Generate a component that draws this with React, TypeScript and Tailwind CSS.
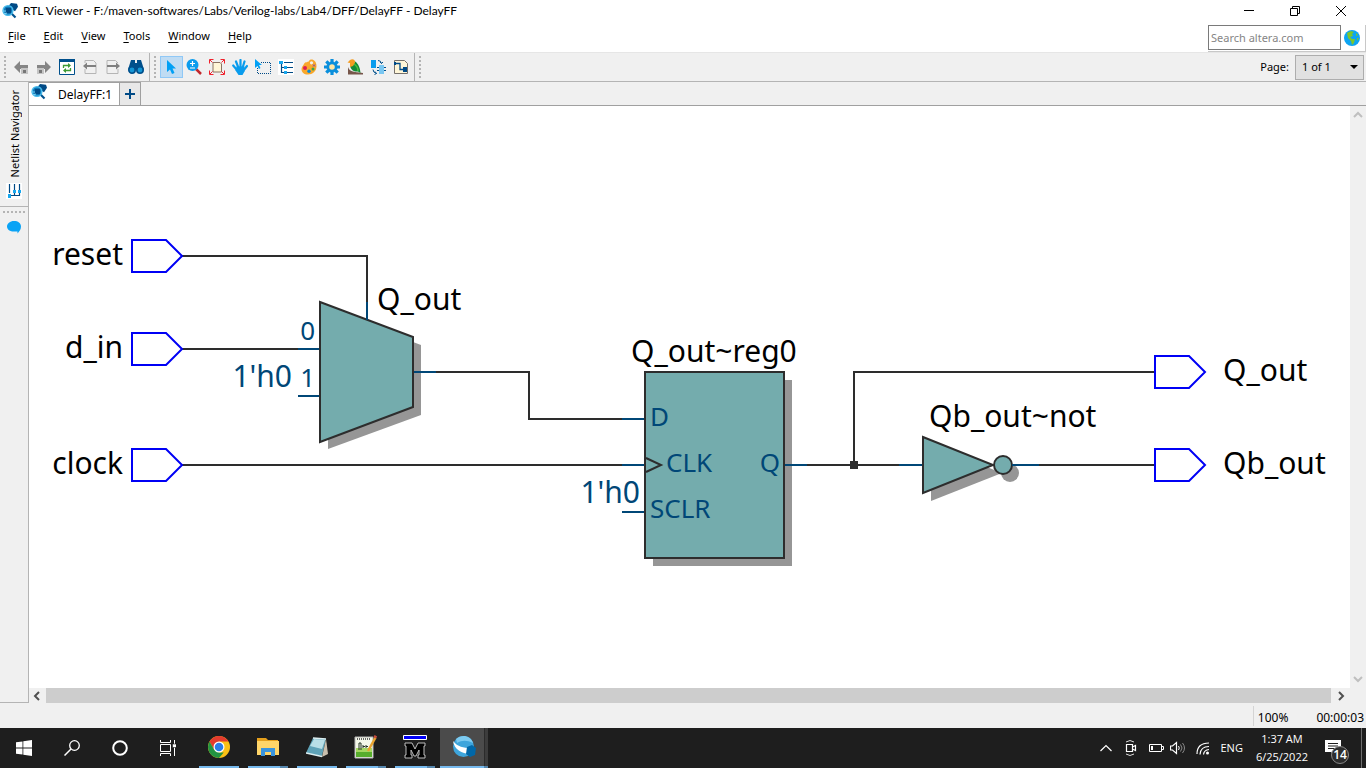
import React from "react";

type IconProps = { children: React.ReactNode; size?: string; box?: string };

function Icon({ children, size = "size-4", box = "0 0 16 16" }: IconProps) {
  return (
    <svg viewBox={box} className={`${size} shrink-0`} fill="none" aria-hidden="true">
      {children}
    </svg>
  );
}

function AppIcon() {
  return (
    <Icon>
      <path d="M7 2.5 9 0l6 .8 1 3-3 4.400-2-1.200L7 4z" fill="#004a86" />
      <path d="M9.500 10.500 13.500 14.500" stroke="#00508c" strokeWidth="2.200" />
      <circle cx="6" cy="7.500" r="4.800" fill="#0b74b5" stroke="#46b9ea" strokeWidth="1.600" />
      <path d="M4 5h5v5H4z" fill="#004a86" />
      <path d="M0 8h4M2 11l3-1" stroke="#7ccff2" strokeWidth="1.200" />
    </Icon>
  );
}

const TreeIcon = () => (
  <Icon>
    <path d="M0 0h16v16H0z" fill="#fff" />
    <path d="M3.500 3v10.500H7M3.500 8.500H7M6 3.500h9M9 8.500h6M9 13.500h6" stroke="#004a86" strokeWidth="1.200" />
    <path d="M1 2h4v3H1zM6 7h3v3H6zM6 12h3v3H6z" fill="#18a7ee" />
  </Icon>
);

const navTools = [
  {
    label: "Back",
    icon: (
      <Icon>
        <path d="M1 8l6-6v4h8v4H7v4z" fill="#858585" />
        <path d="M8 9h7v6H8z" fill="#c4c4c4" />
        <path d="M10 11h3v3h-3z" fill="#777" />
      </Icon>
    ),
  },
  {
    label: "Forward",
    icon: (
      <Icon>
        <path d="M15 8L9 2v4H1v4h8v4z" fill="#858585" />
        <path d="M1 9h7v6H1z" fill="#c4c4c4" />
        <path d="M3 11h3v3H3z" fill="#777" />
      </Icon>
    ),
  },
  {
    label: "Refresh",
    icon: (
      <Icon>
        <path d="M.5.5h15v15H.5z" fill="#fff" stroke="#00508c" />
        <path d="M0 0h16v3H0z" fill="#00508c" />
        <path d="M4.500 9V6.500H11M11.500 9v2.500H5" stroke="#3e9b35" strokeWidth="1.300" />
        <path d="M9 4l3 2.500L9 9zM7 9l-3 2.500L7 14z" fill="#3e9b35" />
      </Icon>
    ),
  },
  {
    label: "Previous page",
    icon: (
      <Icon>
        <path d="M3 4V1.500h8.500L14 4v10.500H3V10" stroke="#b5b5b5" />
        <path d="M1 7l4-3.500V6h9v2H5v2.500z" fill="#808080" />
      </Icon>
    ),
  },
  {
    label: "Next page",
    icon: (
      <Icon>
        <path d="M13 4 10.500 1.500H2v13h11V10" stroke="#b5b5b5" />
        <path d="M15 7l-4-3.500V6H2v2h9v2.500z" fill="#808080" />
      </Icon>
    ),
  },
  {
    label: "Find",
    icon: (
      <Icon>
        <path d="M3 1h4v3h2V1h4l2.500 8v2H.5V9z" fill="#00508c" />
        <circle cx="4" cy="11" r="3.200" fill="#1596d5" stroke="#00508c" strokeWidth="1.600" />
        <circle cx="12" cy="11" r="3.200" fill="#1596d5" stroke="#00508c" strokeWidth="1.600" />
      </Icon>
    ),
  },
];

const viewTools = [
  {
    label: "Selection tool",
    icon: (
      <Icon>
        <path d="M4 1v12l3-2.500L9 15l2.500-1L9.500 9.500H13z" fill="#00a0f5" />
      </Icon>
    ),
  },
  {
    label: "Zoom",
    icon: (
      <Icon>
        <path d="M10 10l5 5" stroke="#c3282d" strokeWidth="2.500" />
        <circle cx="6.500" cy="6" r="6" fill="#0a9ced" />
        <path d="M6.500 2v5M4 4.500h5M4 9h5" stroke="#fff" strokeWidth="1.200" />
      </Icon>
    ),
  },
  {
    label: "Fit in window",
    icon: (
      <Icon>
        <path d="M4 3.500h7l1.500 1.500v8H4z" fill="#fff6d8" stroke="#8b7464" />
        <path
          d="M.5 4.500v-4h4M11.500.5h4v4M.5 11.500v4h4M15.500 11.500v4h-4M1 1l2.500 2.500M15 1l-2.500 2.500M1 15l2.500-2.500M15 15l-2.500-2.500"
          stroke="#f0202b"
        />
      </Icon>
    ),
  },
  {
    label: "Hand tool",
    icon: (
      <Icon>
        <path
          d="M1.200 6.500 5 11M4 2.500 6.500 9M8.500 1v8M12.500 2.500 10.500 9M15 7l-4 5"
          stroke="#0a9ced"
          strokeWidth="2.200"
          strokeLinecap="round"
        />
        <path d="M4.500 7.500h8v5L10.500 16H6.500L3.500 11.500z" fill="#0a9ced" />
      </Icon>
    ),
  },
  {
    label: "Area selection",
    icon: (
      <Icon>
        <path d="M6 3.500h9.500v11h-13V8" stroke="#004a86" strokeDasharray="1 1" />
        <path d="M0 0v9l2.500-2L4 10l1.500-1L4 6h3z" fill="#00a0f5" />
      </Icon>
    ),
  },
  { label: "Netlist navigator", icon: <TreeIcon /> },
  {
    label: "Color settings",
    icon: (
      <Icon>
        <path
          d="M3 5c1.500-3 4-1 5-3 2-3 7.500-1 7.500 5 0 5.500-4 8.500-8.500 8.500-4 0-6.500-2-6.500-5.500C.5 8 2 7 3 5z"
          fill="#f9a72b"
        />
        <circle cx="10.500" cy="3.800" r="1.600" fill="#efefef" />
        <circle cx="4" cy="9" r="2" fill="#dd1f53" />
        <circle cx="8" cy="12.300" r="1.700" fill="#008be0" />
        <circle cx="12" cy="10" r="1.500" fill="#3aa64a" />
        <path d="M12 5.500l2 2M14 5.500l-2 2" stroke="#8147a8" />
      </Icon>
    ),
  },
  {
    label: "Display settings",
    icon: (
      <Icon>
        <path
          d="M8 0v3M8 13v3M0 8h3M13 8h3M2.300 2.300l2.200 2.200M11.500 11.500l2.200 2.200M13.700 2.300l-2.200 2.200M4.500 11.500l-2.200 2.200"
          stroke="#0a8fdc"
          strokeWidth="3.200"
        />
        <circle cx="8" cy="8" r="4.200" fill="#ffe6a5" stroke="#0a8fdc" strokeWidth="2.800" />
      </Icon>
    ),
  },
  {
    label: "Bird's eye view",
    icon: (
      <Icon>
        <path d="M1 8c1 4 5 5 15 6v1.500H1z" fill="#76564a" />
        <path d="M3 5 7 2c3 1 6 5 6.500 12L11 12.500C6 13 3 10 3 5z" fill="#128a36" />
        <path d="M.5 3.500 3 1c3-2 5.500 0 5 3L6 7 3 8V4z" fill="#f49c22" />
        <path d="M7 5c3 2 4 4 4 7" stroke="#4bbf3d" strokeWidth="1.500" />
      </Icon>
    ),
  },
  {
    label: "Swap",
    icon: (
      <Icon>
        <path d="M1 1h5v8H1z" fill="#0a9ced" />
        <path d="M9 6h5v9H9z" fill="#79c7f2" />
        <path
          d="M8 1.500q3 0 3.500 3M10 3l1.500 1.500L13 3M3 10.500q0 3 3.500 4M5 12.500 6.500 14.500 4.500 15.500M7 8.500h2M7 11.500h2M14 8.500h2M14 11.500h2"
          stroke="#00508c"
        />
      </Icon>
    ),
  },
  {
    label: "Schematic page",
    icon: (
      <Icon>
        <path d="M1.500 1.500h10l3 3v10h-13z" fill="#fff6d8" stroke="#75706b" />
        <path d="M1 4.500h6v6h5" stroke="#004a86" strokeWidth="1.300" />
        <path d="M10 8h4v5h-4zM1 3h2v3H1z" fill="#004a86" />
      </Icon>
    ),
  },
];

const menus = ["File", "Edit", "View", "Tools", "Window", "Help"];

function Handle() {
  return (
    <svg viewBox="0 0 2 22" className="h-[22px] w-0.5 shrink-0" aria-hidden="true">
      <path d="M1 0v22" stroke="#b4b4b4" strokeWidth="2" strokeDasharray="2 2" />
    </svg>
  );
}

function TitleBar() {
  return (
    <header className="flex h-[22px] shrink-0 items-center bg-white pr-0.5 pl-0.5">
      <AppIcon />
      <h1 className="ml-[5px] grow font-['Lato',sans-serif] text-xs">
        RTL Viewer - F:/maven-softwares/Labs/Verilog-labs/Lab4/DFF/DelayFF - DelayFF
      </h1>
      <button aria-label="Minimize" className="flex w-[46px] justify-center">
        <Icon size="size-3" box="0 0 12 12">
          <path d="M1 5.500h10" stroke="#000" />
        </Icon>
      </button>
      <button aria-label="Restore" className="flex w-[46px] justify-center">
        <Icon size="size-3" box="0 0 12 12">
          <path d="M1.500 3.500h7v7h-7zM3.500 3.500v-2h7v7h-2" stroke="#000" />
        </Icon>
      </button>
      <button aria-label="Close" className="flex w-[46px] justify-center">
        <Icon size="size-3" box="0 0 12 12">
          <path d="M1 1l10 10M11 1 1 11" stroke="#000" />
        </Icon>
      </button>
    </header>
  );
}

function MenuBar() {
  return (
    <div className="flex h-[30px] shrink-0 items-center justify-between bg-white pl-2">
      <nav className="flex gap-[18px] pb-0.5">
        {menus.map((m) => (
          <button key={m}>
            <span className="underline underline-offset-2">{m[0]}</span>
            {m.slice(1)}
          </button>
        ))}
      </nav>
      <div className="flex items-center gap-[3px] self-end border-r border-b border-[#c8c8c8] pr-[5px] pb-px">
        <input
          aria-label="Search altera.com"
          placeholder="Search altera.com"
          className="h-[25px] w-[133px] border border-[#7a7a7a] bg-white px-0.5 placeholder:text-[#858585]"
        />
        <button aria-label="Open website">
          <Icon>
            <circle cx="8" cy="8" r="8" fill="#0da4f2" />
            <path d="M3 3l4-2 3 1-2 2 1 2-3 1 2 2 3 0-1 4-2 2-1-4-3-3z" fill="#7bc62d" />
            <path d="M12 3l2 2-2 1zM13 8l2 0-2 3z" fill="#7bc62d" />
          </Icon>
        </button>
      </div>
    </div>
  );
}

function ToolBar() {
  return (
    <div className="flex h-[30px] shrink-0 items-center border-t border-b border-t-[#e6e6e6] border-b-[#b4b4b4] bg-[#f0f0f0] pl-1">
      <Handle />
      <div className="ml-[3px] flex">
        {navTools.map((t) => (
          <button key={t.label} aria-label={t.label} className="flex h-[22px] w-[23px] items-center justify-center">
            {t.icon}
          </button>
        ))}
      </div>
      <div className="mr-1 ml-0.5 h-full w-px bg-[#b4b4b4]" />
      <Handle />
      <div className="ml-1 flex">
        {viewTools.map((t, i) => (
          <button
            key={t.label}
            aria-label={t.label}
            className={`flex h-[22px] w-[23px] items-center justify-center pr-px ${
              i === 0 ? "border border-[#90c8f6] bg-[#c0dcf3]" : ""
            }`}
          >
            {t.icon}
          </button>
        ))}
      </div>
      <div className="mr-1 ml-px h-full w-px bg-[#b4b4b4]" />
      <Handle />
      <label htmlFor="page" className="ml-auto">
        Page:
      </label>
      <div className="relative mr-0.5 ml-1.5">
        <select
          id="page"
          className="h-[25px] w-[69px] appearance-none border border-[#adadad] bg-[#e1e1e1] pl-1.5"
        >
          <option>1 of 1</option>
        </select>
        <svg viewBox="0 0 8 4" className="pointer-events-none absolute top-[10px] right-[6px] h-1 w-2">
          <path d="M0 0h8L4 4z" fill="#000" />
        </svg>
      </div>
    </div>
  );
}

function SideBar() {
  return (
    <aside className="flex w-[29px] shrink-0 flex-col items-center border-r border-b border-[#b4b4b4] bg-[#f0f0f0]">
      <button className="flex h-[125px] w-full flex-col items-center gap-1.5 border-b border-[#b4b4b4] pt-2">
        <span className="rotate-180 pr-0.5 leading-4 [writing-mode:vertical-rl]">Netlist Navigator</span>
        <span className="-rotate-90">
          <TreeIcon />
        </span>
      </button>
      <svg viewBox="0 0 22 2" className="mt-1 h-0.5 w-[22px]" aria-hidden="true">
        <path d="M0 1h22" stroke="#b4b4b4" strokeWidth="2" strokeDasharray="2 2" />
      </svg>
      <button aria-label="Messages" className="mt-1.5">
        <Icon>
          <path d="M8 2c4 0 7 2 7 5.500 0 3-1.500 4.500-3.500 7V12.500H8C4 12.500 1 10.500 1 7.500S4 2 8 2z" fill="#0aa3f5" />
        </Icon>
      </button>
    </aside>
  );
}

function Tabs() {
  return (
    <div className="flex h-6 shrink-0 border-b border-[#a0a0a0] bg-[#f0f0f0]">
      <button className="-mb-px flex h-6 w-[91px] items-start gap-[11px] border-t border-r border-b border-[#a0a0a0] bg-white pt-px pl-0.5 text-xs">
        <AppIcon />
        <span className="pt-[3px] leading-4">DelayFF:1</span>
      </button>
      <button
        aria-label="New tab"
        className="flex w-[21px] items-center justify-center border-t border-r border-[#a0a0a0] bg-[#e8e8e8]"
      >
        <Icon size="size-3" box="0 0 12 12">
          <path d="M6 1v10M1 6h10" stroke="#004a86" strokeWidth="2" />
        </Icon>
      </button>
    </div>
  );
}

function Port({ x, y }: { x: number; y: number }) {
  return (
    <path
      transform={`translate(${x} ${y})`}
      d="M0-16h34l16 16-16 16H0z"
      fill="#fff"
      stroke="#0000f5"
      strokeWidth="2"
    />
  );
}

function Schematic() {
  return (
    <svg
      viewBox="29 106 1321 582"
      className="h-[582px] w-[1321px] shrink-0 font-['Noto_Sans',sans-serif]"
      role="img"
      aria-label="DelayFF schematic"
    >
      <g stroke="#2d2d2d" strokeWidth="2" fill="none">
        <path d="M182 256h185v46M182 349h116M182 465h440M436 372h93v47h93M807 465h92M854 465v-93h301M1039 465h116" />
      </g>
      <path d="M850 461h8v8h-8z" fill="#2d2d2d" />

      <g fill="#969696">
        <path d="M328 310l93 35v70l-93 34z" />
        <path d="M653 380h139v186H653z" />
        <path d="M931 445l71 28-71 28z" />
        <circle cx="1010" cy="473" r="9" />
      </g>
      <g fill="#74acad" stroke="#2d2d2d" strokeWidth="2">
        <path d="M320 302l93 35v70l-93 35z" />
        <path d="M645 372h139v186H645z" />
        <path d="M923 437l70 28-70 28z" />
        <circle cx="1003" cy="465" r="9" />
      </g>
      <path d="M646 458l15 7-15 7" fill="none" stroke="#2d2d2d" strokeWidth="2" />
      <path
        d="M367 302v18M298 349h21M298 396h21M414 372h22M622 419h22M622 465h22M622 512h22M785 465h22M899 465h23M1012 465h27"
        stroke="#004777"
        strokeWidth="2"
      />

      <Port x={132} y={256} />
      <Port x={132} y={349} />
      <Port x={132} y={465} />
      <Port x={1155} y={372} />
      <Port x={1155} y={465} />

      <g fontSize="30" fill="#000">
        <text x="123" y="265" textAnchor="end">reset</text>
        <text x="123" y="358" textAnchor="end">d_in</text>
        <text x="123" y="474" textAnchor="end">clock</text>
        <text x="377" y="310">Q_out</text>
        <text x="631" y="362">Q_out~reg0</text>
        <text x="929" y="427">Qb_out~not</text>
        <text x="1223" y="381">Q_out</text>
        <text x="1223" y="474">Qb_out</text>
      </g>
      <g fill="#004777">
        <text x="292" y="387" fontSize="30" textAnchor="end">1'h0</text>
        <text x="640" y="503" fontSize="30" textAnchor="end">1'h0</text>
        <g fontSize="26">
          <text x="315" y="340" textAnchor="end">0</text>
          <text x="315" y="387" textAnchor="end">1</text>
          <text x="650" y="426">D</text>
          <text x="666" y="472">CLK</text>
          <text x="650" y="518">SCLR</text>
          <text x="780" y="472" textAnchor="end">Q</text>
        </g>
      </g>
    </svg>
  );
}

function Arrow({ d, color }: { d: string; color: string }) {
  return (
    <Icon size="size-2.5" box="0 0 10 10">
      <path d={d} stroke={color} strokeWidth="2" />
    </Icon>
  );
}

function Workspace() {
  return (
    <main className="flex min-w-0 grow flex-col">
      <Tabs />
      <div className="flex min-h-0 grow">
        <div className="min-w-0 grow overflow-hidden bg-white">
          <Schematic />
        </div>
        <div className="flex w-4 shrink-0 flex-col items-center justify-between bg-[#f0f0f0] py-1">
          <button aria-label="Scroll up">
            <Arrow d="M1 7l4-4 4 4" color="#bfbfbf" />
          </button>
          <button aria-label="Scroll down">
            <Arrow d="M1 3l4 4 4-4" color="#bfbfbf" />
          </button>
        </div>
      </div>
      <div className="flex h-[15px] shrink-0 items-center bg-[#f0f0f0] pr-5 pl-[3px]">
        <button aria-label="Scroll left">
          <Arrow d="M7 1 3 5l4 4" color="#505050" />
        </button>
        <div className="mr-[5px] ml-1 h-full grow bg-[#cdcdcd]" />
        <button aria-label="Scroll right">
          <Arrow d="M3 1l4 4-4 4" color="#505050" />
        </button>
      </div>
    </main>
  );
}

const pinned = [
  {
    label: "Start",
    icon: (
      <Icon>
        <path d="M0 2.300 6.500 1.400V7.600H0zM7.300 1.300 16 0v7.600H7.300zM0 8.400h6.500v6.200L0 13.700zM7.300 8.400H16V16l-8.700-1.200z" fill="#fff" />
      </Icon>
    ),
  },
  {
    label: "Search",
    icon: (
      <Icon>
        <circle cx="10.500" cy="5.500" r="4.800" stroke="#fff" strokeWidth="1.300" />
        <path d="M7 9 .5 15.500" stroke="#fff" strokeWidth="1.500" />
      </Icon>
    ),
  },
  {
    label: "Cortana",
    icon: (
      <Icon>
        <circle cx="8" cy="8" r="6.800" stroke="#fff" strokeWidth="2" />
      </Icon>
    ),
  },
  {
    label: "Task view",
    icon: (
      <Icon>
        <path d="M.5 0v2.500h10V0M.5 16v-2.500h10V16M.5 4.500h10v7H.5zM14.500 0v16" stroke="#fff" />
        <path d="M12.500 4h4v3.500h-4z" fill="#fff" stroke="#1e1e1e" strokeWidth=".6" />
      </Icon>
    ),
  },
];

const running = [
  {
    label: "Chrome",
    multi: false,
    icon: (
      <Icon size="size-[22px]" box="0 0 22 22">
        <circle cx="11" cy="11" r="11" fill="#fbc116" />
        <path d="M1.500 5.500A11 11 0 0 1 20.500 5.500H11L6.200 13.800z" fill="#e33b2e" />
        <path d="M1.500 5.500 6.200 13.700 11 16.500h4.800L11 22A11 11 0 0 1 1.500 5.500z" fill="#229342" />
        <circle cx="11" cy="11" r="5.500" fill="#fff" />
        <circle cx="11" cy="11" r="4.300" fill="#2b7de9" />
      </Icon>
    ),
  },
  {
    label: "File Explorer",
    multi: true,
    icon: (
      <Icon size="size-[22px]" box="0 0 22 22">
        <path d="M0 2h9l2 2h10v3H0z" fill="#e5a01c" />
        <path d="M0 5h22v14H0z" fill="#ffd569" />
        <path d="M4 20v-8h14v8h-4v-4H8v4z" fill="#3a94dd" />
      </Icon>
    ),
  },
  {
    label: "Notepad",
    multi: false,
    icon: (
      <Icon size="size-[22px]" box="0 0 22 22">
        <path d="M7 2l13 1-4 17L0 17z" fill="#5fa3b8" />
        <path d="M8 3l11 1-3 9L4 10z" fill="#b9dfe7" />
        <path d="M20 3l2 15-6 3z" fill="#c9bfae" />
        <path d="M0 17l16 3.500M7 2l13 1" stroke="#dceff2" strokeWidth="1.500" />
      </Icon>
    ),
  },
  {
    label: "Notepad++",
    multi: true,
    icon: (
      <Icon size="size-6" box="0 0 24 24">
        <path d="M1 2h18v21H1z" fill="#f4f8e9" stroke="#b5b5b5" />
        <path d="M2 13h16v9H2z" fill="#a5d860" />
        <path d="M2 17h16v5H2z" fill="#57ae2c" />
        <path d="M3 4h13" stroke="#666" strokeWidth="2" strokeDasharray="1 1" />
        <path d="M5 8v7M5 8h2v7M9 10v3M9 11.500h2M12 10v3M12 11.500h2" stroke="#253524" />
        <path d="M21.500 2.500 14 16" stroke="#e9a32f" strokeWidth="2.500" />
        <path d="M22.500 2.500 20 1" stroke="#c74c3e" strokeWidth="2.500" />
      </Icon>
    ),
  },
  {
    label: "ModelSim",
    multi: true,
    icon: (
      <Icon size="size-6" box="0 0 24 24">
        <path d="M.5.500h23v4H.5z" fill="#0000f5" stroke="#fff" />
        <path d="M2 8h7l3 6 3-6h7v3h-1v9h1v3h-7v-3h1v-5l-3 6h-2l-3-6v5h1v3H2v-3h1v-9H2z" fill="#000" stroke="#bbb" />
      </Icon>
    ),
  },
];

function TaskBar() {
  return (
    <footer className="flex h-10 shrink-0 items-stretch bg-[#1e1e1e] font-['Open_Sans',sans-serif] text-[11px] text-white">
      {pinned.map((p) => (
        <button key={p.label} aria-label={p.label} className="flex w-12 items-center justify-center">
          {p.icon}
        </button>
      ))}
      <div className="mr-px ml-0.5 flex">
        {running.map((r) => (
          <button key={r.label} aria-label={r.label} className="flex w-[49px] flex-col items-center">
            <span className="flex grow items-center">{r.icon}</span>
            <span className="flex h-0.5 w-10 bg-[#76b9ed]">
              {r.multi && <span className="ml-auto w-2 bg-[#5687ae]" />}
            </span>
          </button>
        ))}
      </div>
      <button aria-label="Quartus" className="flex w-12 flex-col items-stretch bg-[linear-gradient(to_right,#4b4b4b_44px,#2b2b2b_44px,#2b2b2b_45px,#3c3c3c_45px)]">
        <span className="flex grow items-center justify-center">
          <Icon size="size-6" box="0 0 24 24">
            <circle cx="11.500" cy="11.500" r="10.500" fill="#3ea5dc" />
            <path d="M1 6c5 6 10 7 18 7l-1 6C10 19 2 14 1 6z" fill="#fff" />
            <path d="M4 4c5-5 15-4 17 4-6-3-11-3-16 0z" fill="#7ccaf0" />
            <path d="M15 12l5-2 4 3-1 7-5 2-4-3z" fill="#0067a8" />
          </Icon>
        </span>
        <span className="flex h-0.5 bg-[#76b9ed]">
          <span className="ml-auto w-1 bg-[#5687ae]" />
        </span>
      </button>

      <div className="ml-auto flex items-center">
        <button aria-label="Show hidden icons" className="mr-2.5">
          <Icon size="size-3" box="0 0 12 12">
            <path d="M.5 9 6 3.500 11.500 9" stroke="#fff" strokeWidth="1.200" />
          </Icon>
        </button>
        <button aria-label="Meet now" className="mr-2.5">
          <Icon>
            <path d="M4.500 4.500h6v7h-6zM10.500 7l3-1.500v5l-3-1.500" stroke="#fff" strokeWidth="1.200" />
            <path d="M4 2q4-3 8 0M4 14q4 3 8 0" stroke="#ddd" />
          </Icon>
        </button>
        <button aria-label="Battery" className="mr-1.5">
          <Icon>
            <path d="M1.500 4.500h12v7h-12zM13.500 6.500h2v3h-2" stroke="#fff" />
            <path d="M3 6h2v4H3z" fill="#fff" />
          </Icon>
        </button>
        <button aria-label="Volume" className="mr-2.5">
          <Icon>
            <path d="M.5 6h2L6.500 2.500v11L2.500 10h-2z" stroke="#fff" strokeWidth="1.200" />
            <path d="M8.500 6q1.500 2 0 4" stroke="#fff" />
            <path d="M10.500 4.500q3 3.500 0 7M12.500 3q4 5 0 10" stroke="#8b8b8b" />
          </Icon>
        </button>
        <button aria-label="Wi-Fi" className="mr-2.5">
          <Icon size="size-3.5" box="0 0 14 14">
            <path d="M1 13Q1 2 13 2M4 13.500Q4.500 5.500 13 5.500M7.500 13.500Q8 9 13 8.500" stroke="#fff" strokeWidth="1.200" />
            <circle cx="11.500" cy="12" r="1.500" fill="#fff" />
          </Icon>
        </button>
        <button>ENG</button>
        <button className="ml-[13px] text-center leading-[18px]">
          1:37 AM
          <br />
          6/25/2022
        </button>
        <button aria-label="Notifications, 14 new" className="relative ml-[17px] flex h-full w-9 items-center">
          <Icon>
            <path d="M0 0h16v12H9v3l-3-3H0z" fill="#fff" />
            <path d="M3 3.500h10M3 6h10M3 8.500h7" stroke="#1e1e1e" />
          </Icon>
          <span className="absolute top-[18px] left-1.5 flex size-[18px] items-center justify-center rounded-full border border-[#888] bg-[#2d2d2d] text-xs font-semibold">
            14
          </span>
        </button>
        <div className="mr-1 h-full w-px bg-[#6e6e6e]" />
      </div>
    </footer>
  );
}

export default function App() {
  return (
    <div className="flex h-screen flex-col overflow-hidden bg-[#f0f0f0] font-['Noto_Sans',sans-serif] text-[11px] text-black">
      <TitleBar />
      <MenuBar />
      <ToolBar />
      <div className="flex min-h-0 grow">
        <SideBar />
        <Workspace />
      </div>
      <div className="flex h-[25px] shrink-0 items-center justify-end gap-7 pt-1 pr-0.5 text-xs">
        <span className="flex items-center gap-1">
          <span className="-mt-1 h-5 w-px bg-[#d4d4d4]" />
          100%
        </span>
        <span>00:00:03</span>
      </div>
      <TaskBar />
    </div>
  );
}
